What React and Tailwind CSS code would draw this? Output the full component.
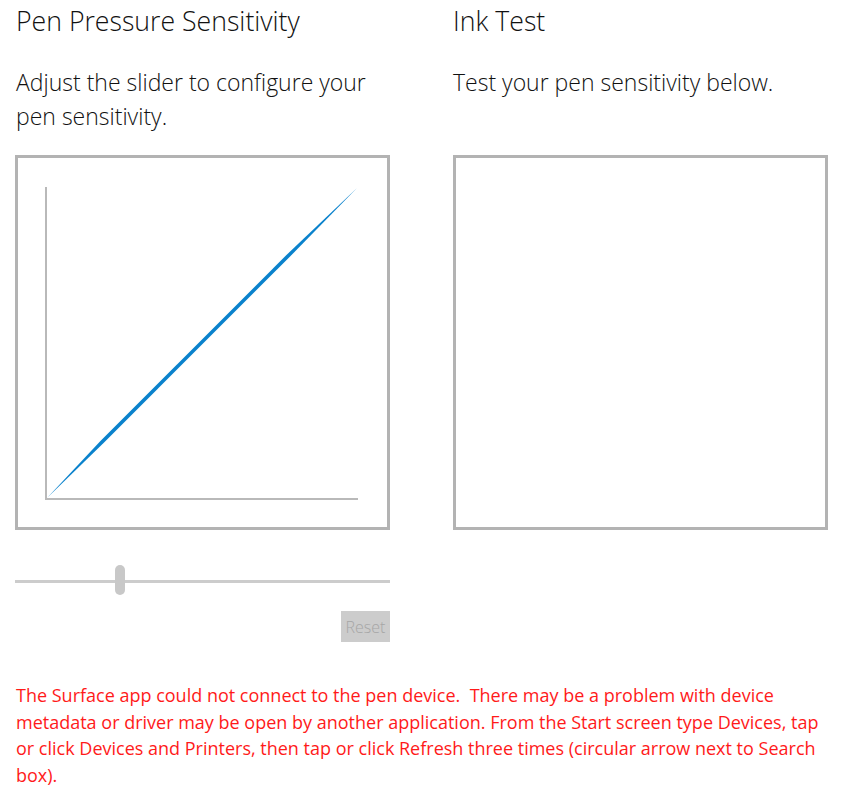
import React from "react";

function Curve() {
  return (
    <svg width="369" height="369" viewBox="0 0 369 369" className="block">
      <rect x="27" y="29" width="2" height="313" fill="#b9b9b9" />
      <rect x="27" y="340" width="313" height="2" fill="#b9b9b9" />
      <polygon
        points="29,340 85.3,285.3 271.3,99.3 339,30 268.7,96.7 82.7,282.7"
        fill="#0a82cc"
      />
    </svg>
  );
}

export default function App() {
  return (
    <div
      className="bg-white min-h-[812px] w-[844px] pl-[15px] pt-[1px] text-black"
      style={{ fontFamily: '"Open Sans", "Noto Sans", sans-serif' }}
    >
      <div className="grid grid-cols-[375px_375px] gap-x-[63px]">
        <div className="flex flex-col">
          <h1 className="text-[26.67px] font-light leading-[40px] pl-[1px] text-[#111111]">
            Pen Pressure Sensitivity
          </h1>
          <div className="h-[114px] pt-[24px] text-[23px] font-light leading-[34px] pl-[1px] text-[#111111]">
            <p>Adjust the slider to configure your</p>
            <p>pen sensitivity.</p>
          </div>
          <div className="w-[375px] h-[375px] border-[3px] border-[#b3b3b3]">
            <Curve />
          </div>
          <div className="relative mt-[35px] h-[32px] w-[375px]">
            <div className="absolute left-0 right-0 top-[15px] h-[3px] bg-[#cccccc]" />
            <div className="absolute left-[100px] top-0 w-[10px] h-[30px] rounded-[5px] bg-[#c8c8c8]" />
          </div>
          <div className="flex justify-end mt-[14px]">
            <div className="w-[49px] h-[31px] bg-[#cccccc] text-[#a6a6a6] text-[16px] font-light flex items-center justify-center">
              Reset
            </div>
          </div>
        </div>
        <div className="flex flex-col">
          <h1 className="text-[26.67px] font-light leading-[40px] text-[#111111]">
            Ink Test
          </h1>
          <div className="h-[114px] pt-[24px] text-[23px] font-light leading-[34px] text-[#111111]">
            <p>Test your pen sensitivity below.</p>
          </div>
          <div className="w-[375px] h-[375px] border-[3px] border-[#b3b3b3]" />
        </div>
      </div>
      <div className="mt-[40px] pl-[1px] text-[18px] leading-[26.67px] text-[#ff1a1a] whitespace-pre">
        <p>The Surface app could not connect to the pen device.  There may be a problem with device</p>
        <p>metadata or driver may be open by another application. From the Start screen type Devices, tap</p>
        <p>or click Devices and Printers, then tap or click Refresh three times (circular arrow next to Search</p>
        <p>box).</p>
      </div>
    </div>
  );
}
